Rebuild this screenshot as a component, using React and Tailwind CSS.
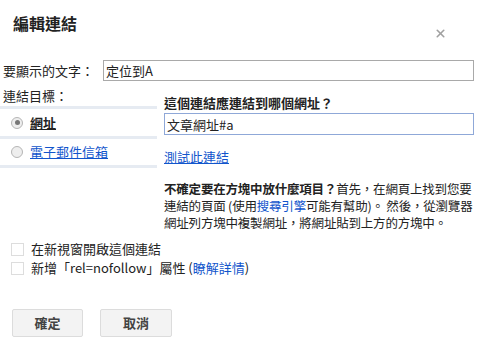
import { X } from 'lucide-react';

export default function App() {
  const font = { fontFamily: '"Noto Sans CJK TC", "Liberation Sans", sans-serif' };

  return (
    <div className="w-[482px] h-[347px] bg-white text-[13px] text-[#222] relative overflow-hidden" style={font}>
      {/* header */}
      <div className="flex justify-between">
        <h1 className="pl-[13px] pt-[12px] text-[16px] font-bold leading-[22px] text-[#222]">編輯連結</h1>
        <div className="pt-[27px] pr-[35px]">
          <X size={13} strokeWidth={3} className="text-[#a0a0a0]" />
        </div>
      </div>

      {/* display text */}
      <div className="flex items-center mt-[20px] pl-[3px] pr-[8px]">
        <span className="leading-[20px]">要顯示的文字：</span>
        <input
          className="ml-auto w-[371px] h-[21px] border border-[#a9a9a9] px-[2px] text-[13px] outline-none"
          defaultValue="定位到A"
          style={font}
        />
      </div>

      {/* link target */}
      <div className="flex items-start mt-[6px]">
        <div className="w-[157px] shrink-0 flex flex-col gap-[3px] bg-[#e6ebf2] pb-[3px]">
          <div className="bg-white h-[19px] pl-[3px] leading-[18px]">連結目標：</div>
          <div className="bg-white h-[27px] flex items-center pl-[11px] gap-[7px]">
            <span className="w-[12px] h-[12px] rounded-full border border-[#b5b5b5] bg-[#eee] flex items-center justify-center">
              <span className="w-[5px] h-[5px] rounded-full bg-[#777]"></span>
            </span>
            <span className="font-bold underline">網址</span>
          </div>
          <div className="bg-white h-[26px] flex items-center pl-[11px] gap-[7px]">
            <span className="w-[12px] h-[12px] rounded-full border border-[#b5b5b5] bg-[#eee]"></span>
            <span className="text-[#15c] underline">電子郵件信箱</span>
          </div>
        </div>

        <div className="flex-1 pl-[7px] pr-[8px] pt-[7px]">
          <div className="font-bold leading-[18px]">這個連結應連結到哪個網址？</div>
          <input
            className="mt-[1px] w-full h-[22px] border border-[#8fa8d8] px-[2px] text-[13px] outline-none"
            defaultValue="文章網址#a"
            style={font}
          />
          <a className="block mt-[13px] text-[#15c] underline leading-[18px]" href="#">測試此連結</a>
          <p className="mt-[14px] leading-[17px] text-[12.5px] tracking-[-0.2px] text-[#222]">
            <span className="font-bold">不確定要在方塊中放什麼項目？</span>首先，在網頁上找到您要連結的頁面 (使用<span className="text-[#15c]">搜尋引擎</span>可能有幫助)。 然後，從瀏覽器網址列方塊中複製網址，將網址貼到上方的方塊中。
          </p>
        </div>
      </div>

      {/* options */}
      <div className="mt-[9px] pl-[11px] flex flex-col gap-[1px]">
        <label className="flex items-center gap-[7px] leading-[18px]">
          <span className="w-[13px] h-[13px] border border-[#ddd] bg-white"></span>
          在新視窗開啟這個連結
        </label>
        <label className="flex items-center gap-[7px] leading-[18px]">
          <span className="w-[13px] h-[13px] border border-[#ddd] bg-white"></span>
          <span>新增「rel=nofollow」屬性 (<span className="text-[#15c]">瞭解詳情</span>)</span>
        </label>
      </div>

      {/* buttons */}
      <div className="flex gap-[17px] pl-[12px] mt-[32px]">
        <button className="w-[71px] h-[28px] border border-[#dcdcdc] bg-[#f3f3f3] rounded-[2px] font-bold text-[#444] text-[13px]" style={font}>確定</button>
        <button className="w-[72px] h-[28px] border border-[#dcdcdc] bg-[#f3f3f3] rounded-[2px] font-bold text-[#444] text-[13px]" style={font}>取消</button>
      </div>
    </div>
  );
}
